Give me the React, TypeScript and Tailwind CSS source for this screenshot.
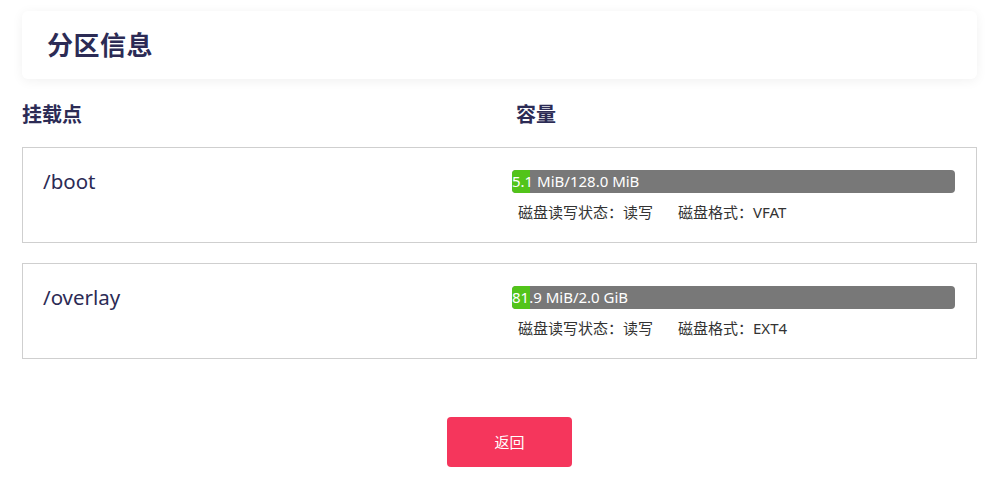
import React from 'react';

const partitions = [
  { mount: '/boot', used: '5.1 MiB', total: '128.0 MiB', pct: 4, rw: '读写', fs: 'VFAT' },
  { mount: '/overlay', used: '81.9 MiB', total: '2.0 GiB', pct: 4, rw: '读写', fs: 'EXT4' },
];

const font = { fontFamily: '"Noto Sans", "Noto Sans CJK SC", sans-serif' };

export default function App() {
  return (
    <div className="min-h-[490px] bg-white pl-[22px] pr-[16px] pt-[11px] text-[#2c2b55]" style={font}>
      {/* Page header card */}
      <div className="h-[68px] rounded-md bg-white shadow-[0_2px_12px_rgba(0,0,0,0.06)] flex items-center pl-[25px]">
        <h1 className="text-[26px] font-bold leading-none tracking-[0.5px]">分区信息</h1>
      </div>

      {/* Column titles */}
      <div className="flex h-[46px] mt-[13px] items-center text-[20px] font-bold">
        <div className="w-[494px]">挂载点</div>
        <div>容量</div>
      </div>

      <div className="flex flex-col gap-[20px] mt-[9px]">
        {partitions.map((p) => (
          <div key={p.mount} className="h-[96px] border border-[#cfcfcf] flex pl-[20px] pt-[22px]">
            <div className="w-[469px] text-[20.5px] leading-[26px] -mt-[2px]">{p.mount}</div>
            <div className="w-[443px]">
              <div className="relative h-[23px] rounded-[4px] bg-[#787878] overflow-hidden">
                <div className="absolute left-0 top-0 h-full bg-[#52c41a]" style={{ width: `${p.pct}%` }} />
                <div className="relative text-[15px] leading-[23px] text-white">
                  {p.used}/{p.total}
                </div>
              </div>
              <div className="flex pl-[6px] mt-[8px] text-[15px] leading-[22px] text-[#333]">
                <span className="w-[160px]">磁盘读写状态：{p.rw}</span>
                <span>磁盘格式：{p.fs}</span>
              </div>
            </div>
          </div>
        ))}
      </div>

      <div className="flex justify-center pl-[20px] mt-[58px]">
        <button className="w-[125px] h-[50px] rounded-[4px] bg-[#f5365c] text-white text-[15px]">返回</button>
      </div>
    </div>
  );
}
